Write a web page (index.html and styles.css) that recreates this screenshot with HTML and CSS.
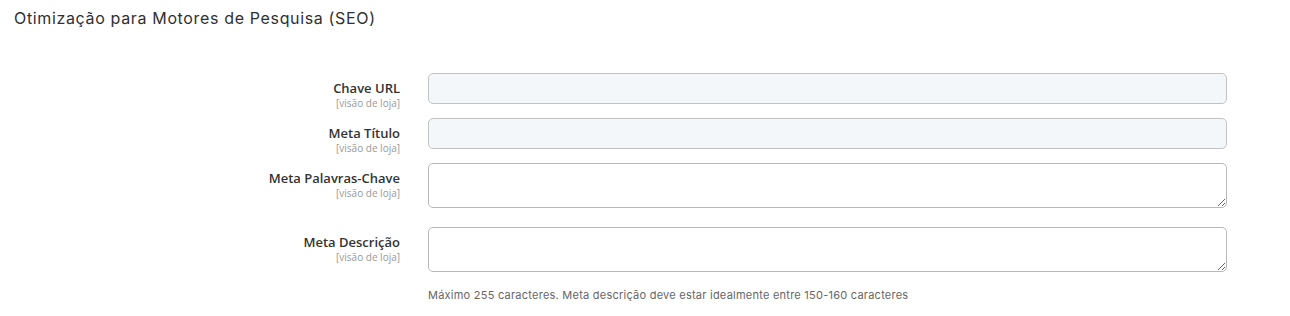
FILE: index.html
```html
<!DOCTYPE html>
<html lang="pt">
<head>
    <meta charset="UTF-8">
    <meta name="viewport" content="width=device-width, initial-scale=1.0">
    <title>SEO</title>
    <link rel="stylesheet" href="styles.css">
</head>
<body>
    <div class="section">
        <h3 class="section-title">Otimização para Motores de Pesquisa (SEO)</h3>

        <div class="form">
            <div class="row">
                <label class="label">
                    <span class="label-text">Chave URL</span>
                    <span class="scope">[visão de loja]</span>
                </label>
                <div class="control">
                    <input type="text" class="input">
                </div>
            </div>

            <div class="row">
                <label class="label">
                    <span class="label-text">Meta Título</span>
                    <span class="scope">[visão de loja]</span>
                </label>
                <div class="control">
                    <input type="text" class="input">
                </div>
            </div>

            <div class="row">
                <label class="label">
                    <span class="label-text">Meta Palavras-Chave</span>
                    <span class="scope">[visão de loja]</span>
                </label>
                <div class="control">
                    <textarea class="textarea"></textarea>
                </div>
            </div>

            <div class="row row-last">
                <label class="label">
                    <span class="label-text">Meta Descrição</span>
                    <span class="scope">[visão de loja]</span>
                </label>
                <div class="control">
                    <textarea class="textarea"></textarea>
                    <p class="note">Máximo 255 caracteres. Meta descrição deve estar idealmente entre 150-160 caracteres</p>
                </div>
            </div>
        </div>
    </div>
</body>
</html>
```

FILE: styles.css
```css
body {
    margin: 0;
    padding: 0;
    background: #fff;
    font-family: "Open Sans", Arial, sans-serif;
    color: #333;
}

.section {
    padding: 8px 14px;
}

.section-title {
    margin: 0;
    font-family: Inter, "Liberation Sans", sans-serif;
    font-size: 16px;
    font-weight: 400;
    line-height: 20px;
    letter-spacing: 0.65px;
    color: #303030;
}

.form {
    margin-top: 45px;
}

.row {
    display: grid;
    grid-template-columns: 386px 799px;
    column-gap: 28px;
    align-items: start;
    margin-bottom: 14px;
}

.row-last {
    margin-top: 19px;
}

/* label block is taller than the input, let it hang below */
.label {
    display: flex;
    flex-direction: column;
    align-items: flex-end;
    padding-top: 6px;
    margin-bottom: -12px;
    text-align: right;
}

.label-text {
    font-size: 13px;
    font-weight: 600;
    line-height: 18px;
    color: #333;
}

.scope {
    font-size: 10px;
    line-height: 12px;
    color: #999;
}

.control {
    display: flex;
    flex-direction: column;
}

.input,
.textarea {
    box-sizing: border-box;
    width: 100%;
    margin: 0;
    border: 1px solid #c2c2c2;
    border-radius: 5px;
    font-family: inherit;
    font-size: 13px;
}

.input {
    height: 31px;
    background: #f4f7fa;
}

.textarea {
    display: block;
    height: 45px;
    background: #fff;
    border-color: #b8b8b8;
    resize: vertical;
}

.note {
    margin: 16px 0 0;
    font-family: Inter, "Liberation Sans", sans-serif;
    font-size: 11px;
    line-height: 14px;
    letter-spacing: 0.24px;
    color: #666;
}
```
